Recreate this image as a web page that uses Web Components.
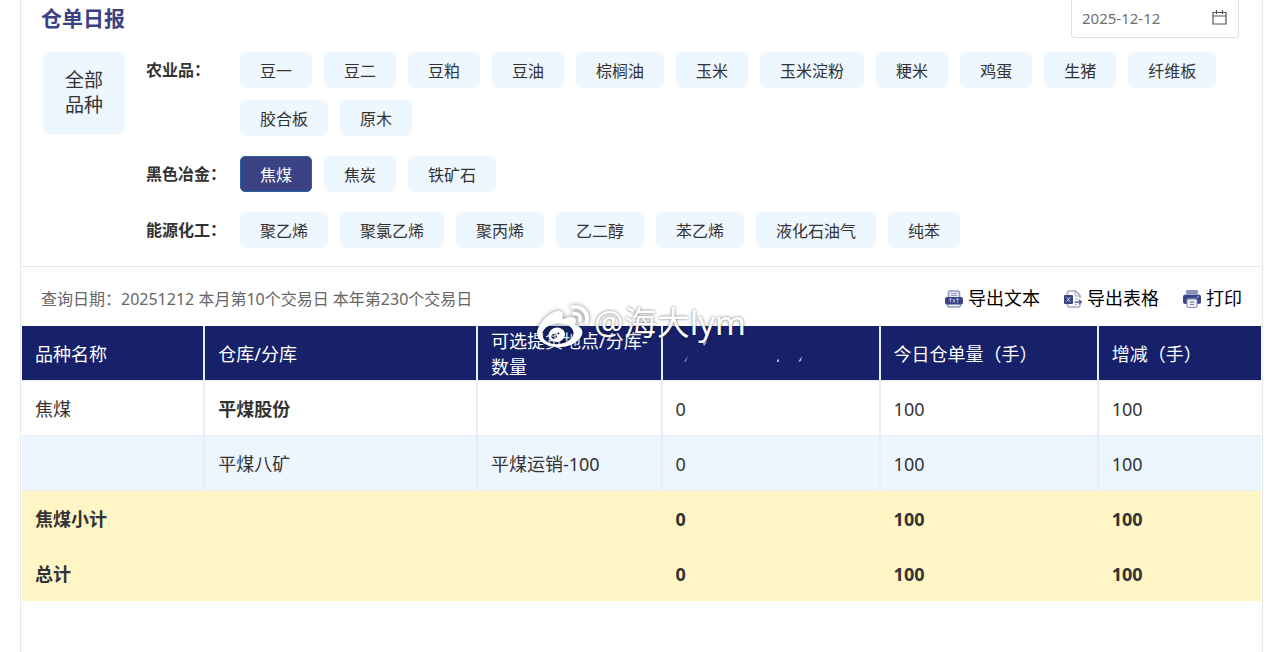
<!DOCTYPE html>
<html lang="zh-CN">
<head>
<meta charset="utf-8">
<meta name="viewport" content="width=device-width, initial-scale=1">
<title>仓单日报</title>
<style>
    body {
        margin: 0;
        background: #fff;
        color: #333;
        font-family: "Noto Sans", "Noto Sans CJK SC", sans-serif;
        font-size: 16px;
    }
</style>
</head>
<body>
<daily-report>
    <date-field slot="date" value="2025-12-12"></date-field>
    <filter-group slot="filters" label="农业品：" items="豆一,豆二,豆粕,豆油,棕榈油,玉米,玉米淀粉,粳米,鸡蛋,生猪,纤维板,胶合板,原木"></filter-group>
    <filter-group slot="filters" label="黑色冶金：" items="焦煤,焦炭,铁矿石" active="焦煤"></filter-group>
    <filter-group slot="filters" label="能源化工：" items="聚乙烯,聚氯乙烯,聚丙烯,乙二醇,苯乙烯,液化石油气,纯苯"></filter-group>
    <span slot="summary">查询日期：20251212 本月第10个交易日 本年第230个交易日</span>
    <export-action slot="actions" icon="text">导出文本</export-action>
    <export-action slot="actions" icon="sheet">导出表格</export-action>
    <export-action slot="actions" icon="print">打印</export-action>
    <receipt-table></receipt-table>
    <water-mark slot="mark">@海大lym</water-mark>
</daily-report>

<script>
class DailyReport extends HTMLElement {
    constructor() {
        super();
        this.attachShadow({mode: 'open'}).innerHTML = `
            <style>
                :host {
                    display: block;
                    position: relative;
                }
                * { box-sizing: border-box; }
                main {
                    min-height: 100vh;
                    margin: 0 20px;
                    border: solid #e8e8ec;
                    border-width: 0 1px;
                }
                header {
                    display: flex;
                    justify-content: space-between;
                    align-items: flex-start;
                    padding: 0 23px 0 20px;
                }
                h1 {
                    margin: 0;
                    font-size: 21px;
                    line-height: 36px;
                    color: #3b4284;
                }
                .filters {
                    display: flex;
                    align-items: flex-start;
                    gap: 21px;
                    padding: 14px 22px 18px;
                    border-bottom: 1px solid #e8e8ec;
                }
                .all {
                    flex: none;
                    width: 82px;
                    height: 82px;
                    padding: 0 20px;
                    border: 0;
                    border-radius: 6px;
                    background: #eef6fe;
                    color: #333;
                    font: inherit;
                    font-size: 19px;
                    line-height: 25px;
                }
                .groups {
                    flex: 1;
                    display: flex;
                    flex-direction: column;
                    gap: 20px;
                }
                .toolbar {
                    display: flex;
                    justify-content: space-between;
                    align-items: center;
                    padding: 16px 20px 13px;
                    color: #666;
                }
                .actions {
                    display: flex;
                    gap: 24px;
                }
            </style>
            <main>
                <header>
                    <h1>仓单日报</h1>
                    <slot name="date"></slot>
                </header>
                <section class="filters">
                    <button class="all" type="button">全部品种</button>
                    <div class="groups"><slot name="filters"></slot></div>
                </section>
                <div class="toolbar">
                    <slot name="summary"></slot>
                    <div class="actions"><slot name="actions"></slot></div>
                </div>
                <slot></slot>
            </main>
            <slot name="mark"></slot>
        `;
    }
}

class DateField extends HTMLElement {
    connectedCallback() {
        this.attachShadow({mode: 'open'}).innerHTML = `
            <style>
                :host { display: block; }
                label {
                    display: flex;
                    align-items: center;
                    box-sizing: border-box;
                    width: 168px;
                    height: 38px;
                    padding: 0 11px 2px 10px;
                    border: 1px solid #dcdfe6;
                    border-top: 0;
                    border-radius: 0 0 4px 4px;
                }
                input {
                    flex: 1;
                    min-width: 0;
                    padding: 0;
                    border: 0;
                    outline: 0;
                    background: none;
                    color: #707070;
                    font: 15px "Noto Sans", sans-serif;
                }
                svg {
                    flex: none;
                    width: 15px;
                    height: 15px;
                }
            </style>
            <label>
                <input type="text" aria-label="日期" value="${this.getAttribute('value')}">
                <svg viewBox="0 0 15 15" fill="none" stroke="#555" stroke-width="1.2">
                    <path d="M1 2.5h13v11.500H1zM1 6h13M4.500 0v4M10.500 0v4"/>
                </svg>
            </label>
        `;
    }
}

class FilterGroup extends HTMLElement {
    connectedCallback() {
        const active = this.getAttribute('active');
        const chips = this.getAttribute('items').split(',').map(item =>
            `<button type="button" aria-pressed="${item === active}">${item}</button>`
        ).join('');
        this.attachShadow({mode: 'open'}).innerHTML = `
            <style>
                :host { display: flex; }
                strong {
                    flex: none;
                    width: 94px;
                    line-height: 36px;
                    white-space: nowrap;
                }
                .chips {
                    display: flex;
                    flex-wrap: wrap;
                    gap: 12px;
                }
                button {
                    height: 36px;
                    padding: 0 19px;
                    border: 1px solid #eef6fe;
                    border-radius: 5px;
                    background: #eef6fe;
                    color: #333;
                    font: inherit;
                }
                button[aria-pressed="true"] {
                    border-color: #2c62a4;
                    background: #3b4385;
                    color: #fff;
                }
            </style>
            <strong>${this.getAttribute('label')}</strong>
            <div class="chips">${chips}</div>
        `;
    }
}

const icons = {
    text: `
        <path d="M3.500 8V3q0-2 2-2h7q2 0 2 2v5" fill="#e9ebf5" stroke="#9298bd" stroke-width="1.600"/>
        <path d="M6 3.500h6M6 5.500h6" stroke="#9298bd"/>
        <path d="M2.500 13v2q0 2 2 2h9q2 0 2-2v-2" fill="#e9ebf5" stroke="#9298bd" stroke-width="1.600"/>
        <rect y="7" width="18" height="7.500" rx="2" fill="#3b4486"/>
        <path d="M4 9h3M5.500 9v3.500M7.700 9l2.500 3.500M10.200 9L7.700 12.500M11 9h3M12.500 9v3.500" stroke="#c6cae2" stroke-width=".8" fill="none"/>`,
    sheet: `
        <path d="M3.500 5V3q0-2 2-2h6L16 5.500V8M16 14v1q0 2-2 2H5.500q-2 0-2-2v-1" fill="none" stroke="#a3a8ca" stroke-width="1.600"/>
        <path d="M11 1.500V6h5" fill="none" stroke="#a3a8ca"/>
        <path d="M11 9h3M11 14.500h2" stroke="#a3a8ca"/>
        <path d="M10.500 12H17M15 9.800l2.500 2.200-2.500 2.200" fill="none" stroke="#5b6399" stroke-width="1.300"/>
        <rect y="5" width="9" height="9" rx="1" fill="#3b4486"/>
        <path d="M2.800 7.300l3.400 4.400M6.200 7.300l-3.400 4.400" stroke="#d5d8ea"/>`,
    print: `
        <rect x="3" width="12" height="4" rx="1" fill="#8b91b9"/>
        <rect y="4.500" width="18" height="9.500" rx="2.500" fill="#3b4486"/>
        <circle cx="14.800" cy="7" r=".8" fill="#c9cde4"/>
        <rect x="4" y="9" width="10" height="8.300" rx="1.500" fill="#fff" stroke="#8b91b9" stroke-width="1.300"/>
        <path d="M6.500 12h5M6.500 14.500h5" stroke="#8b91b9" stroke-width="1.300"/>`
};

class ExportAction extends HTMLElement {
    connectedCallback() {
        this.attachShadow({mode: 'open'}).innerHTML = `
            <style>
                :host { display: block; }
                button {
                    display: flex;
                    align-items: center;
                    gap: 5px;
                    padding: 0;
                    border: 0;
                    background: none;
                    color: #000;
                    font: inherit;
                    font-size: 18px;
                    line-height: 30px;
                }
                svg {
                    width: 18px;
                    height: 18px;
                    margin-top: 2px;
                }
            </style>
            <button type="button">
                <svg viewBox="0 0 18 18">${icons[this.getAttribute('icon')]}</svg>
                <slot></slot>
            </button>
        `;
    }
}

class ReceiptTable extends HTMLElement {
    constructor() {
        super();
        this.attachShadow({mode: 'open'}).innerHTML = `
            <style>
                :host {
                    display: block;
                    margin: 0 1px;
                }
                table {
                    width: 100%;
                    table-layout: fixed;
                    border-spacing: 0;
                    font-size: 18px;
                    line-height: 26px;
                    text-align: left;
                }
                th, td {
                    box-sizing: border-box;
                    height: 55px;
                    padding: 2px 6px 0 13px;
                    border: solid #e8eef5;
                    border-width: 0 2px 1px 0;
                }
                th {
                    background: #16216a;
                    color: #fff;
                    font-weight: 400;
                    white-space: nowrap;
                }
                th:last-child, td:last-child { border-right-width: 0; }
                tbody tr:nth-child(even) { background: #edf6fe; }
                tfoot td {
                    border-color: #fff5c5;
                    background: #fff5c5;
                    font-weight: 700;
                }
                .product { width: 14.8%; }
                .store { width: 22%; }
                .place { width: 14.9%; }
                .amount { width: 17.6%; }
                svg {
                    display: block;
                    width: 140px;
                    height: 36px;
                }
            </style>
            <table>
                <thead>
                    <tr>
                        <th class="product">品种名称</th>
                        <th class="store">仓库/分库</th>
                        <th class="place">可选提货地点/分库-<br>数量</th>
                        <th class="amount">
                            <svg viewBox="0 0 140 36" fill="#aeb5da">
                                <path d="M26 5l5 1-3 4zM12 20l-2 5-2 1zM101 24l2-1v3h-2zM126 20l-1 5-3 1z"/>
                            </svg>
                        </th>
                        <th class="amount">今日仓单量（手）</th>
                        <th>增减（手）</th>
                    </tr>
                </thead>
                <tbody>
                    <tr><td>焦煤</td><td><b>平煤股份</b></td><td></td><td>0</td><td>100</td><td>100</td></tr>
                    <tr><td></td><td>平煤八矿</td><td>平煤运销-100</td><td>0</td><td>100</td><td>100</td></tr>
                </tbody>
                <tfoot>
                    <tr><td>焦煤小计</td><td></td><td></td><td>0</td><td>100</td><td>100</td></tr>
                    <tr><td>总计</td><td></td><td></td><td>0</td><td>100</td><td>100</td></tr>
                </tfoot>
            </table>
        `;
    }
}

class WaterMark extends HTMLElement {
    constructor() {
        super();
        this.attachShadow({mode: 'open'}).innerHTML = `
            <style>
                :host {
                    position: absolute;
                    inset: 0;
                    display: flex;
                    align-items: center;
                    justify-content: center;
                    gap: 5px;
                    color: #fff;
                    font-size: 33px;
                    line-height: 42px;
                    text-shadow: 0 0 3px rgba(0, 0, 0, 0.6);
                    pointer-events: none;
                }
                svg {
                    width: 52px;
                    height: 52px;
                    fill: #fff;
                    filter: drop-shadow(0 0 2px rgba(0, 0, 0, 0.5));
                }
                span { padding-bottom: 6px; }
            </style>
            <svg viewBox="0 0 24 24"><path d="M10.098 20.323c-3.977.391-7.414-1.406-7.672-4.02-.259-2.609 2.759-5.047 6.740-5.441 3.979-.394 7.413 1.404 7.671 4.018.259 2.600-2.759 5.049-6.737 5.439l-.002.004zM9.050 17.219c-.384.616-1.208.884-1.829.602-.612-.279-.793-.991-.406-1.593.379-.595 1.176-.861 1.793-.601.622.263.820.972.442 1.592zm1.270-1.627c-.141.237-.449.353-.689.253-.236-.090-.313-.361-.177-.586.138-.227.436-.346.672-.240.239.090.315.360.180.601l.014-.028zm.176-2.719c-1.893-.493-4.033.450-4.857 2.118-.836 1.704-.026 3.591 1.886 4.210 1.983.640 4.318-.341 5.132-2.179.800-1.793-.201-3.642-2.161-4.149zm7.563-1.224c-.346-.105-.570-.180-.405-.615.375-.977.420-1.804 0-2.404-.781-1.112-2.915-1.053-5.364-.030 0 0-.766.331-.571-.271.376-1.217.315-2.224-.270-2.809-1.338-1.337-4.869.045-7.888 3.080C1.309 10.870 0 13.273 0 15.348c0 3.981 5.099 6.395 10.086 6.395 6.536 0 10.888-3.801 10.888-6.820 0-1.822-1.547-2.854-2.915-3.284v.010zm1.908-5.092c-.766-.856-1.908-1.187-2.960-.962-.436.090-.706.511-.616.932.090.420.511.691.932.602.511-.105 1.067.044 1.442.465.376.421.466.977.316 1.473-.136.406.089.856.510.992.405.119.857-.105.992-.512.330-1.021.120-2.178-.646-3.035l.030.045zm2.418-2.195c-1.576-1.757-3.905-2.419-6.054-1.968-.496.104-.812.587-.706 1.081.104.496.586.813 1.082.707 1.532-.331 3.185.150 4.296 1.383 1.112 1.246 1.429 2.943.947 4.416-.165.480.106 1.007.586 1.157.479.165.991-.104 1.157-.586.675-2.088.241-4.478-1.338-6.235l.030.045z"/></svg>
            <span><slot></slot></span>
        `;
    }
}

customElements.define('daily-report', DailyReport);
customElements.define('date-field', DateField);
customElements.define('filter-group', FilterGroup);
customElements.define('export-action', ExportAction);
customElements.define('receipt-table', ReceiptTable);
customElements.define('water-mark', WaterMark);
</script>
</body>
</html>
